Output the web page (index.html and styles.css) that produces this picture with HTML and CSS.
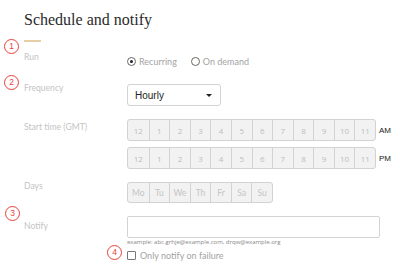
FILE: index.html
```html
<!DOCTYPE html>
<html>
<head>
<meta charset="utf-8">
<link rel="stylesheet" href="styles.css">
</head>
<body>
<div class="page">
  <h1 class="title">Schedule and notify</h1>
  <div class="accent"></div>

  <div class="row row-run">
    <span class="marker m1">1</span>
    <div class="label">Run</div>
    <div class="control radios">
      <label class="radio"><span class="dot on"></span>Recurring</label>
      <label class="radio"><span class="dot"></span>On demand</label>
    </div>
  </div>

  <div class="row row-freq">
    <span class="marker m2">2</span>
    <div class="label">Frequency</div>
    <div class="control">
      <div class="select"><span>Hourly</span><span class="caret"></span></div>
    </div>
  </div>

  <div class="row row-time">
    <div class="label">Start time (GMT)</div>
    <div class="control times">
      <div class="time-line">
        <div class="seg hours">
          <span>12</span><span>1</span><span>2</span><span>3</span><span>4</span><span>5</span><span>6</span><span>7</span><span>8</span><span>9</span><span>10</span><span>11</span>
        </div>
        <span class="ampm">AM</span>
      </div>
      <div class="time-line">
        <div class="seg hours">
          <span>12</span><span>1</span><span>2</span><span>3</span><span>4</span><span>5</span><span>6</span><span>7</span><span>8</span><span>9</span><span>10</span><span>11</span>
        </div>
        <span class="ampm">PM</span>
      </div>
    </div>
  </div>

  <div class="row row-days">
    <div class="label">Days</div>
    <div class="control">
      <div class="seg days">
        <span>Mo</span><span>Tu</span><span>We</span><span>Th</span><span>Fr</span><span>Sa</span><span>Su</span>
      </div>
    </div>
  </div>

  <div class="row row-notify">
    <span class="marker m3">3</span>
    <div class="label">Notify</div>
    <div class="control notify">
      <div class="input"></div>
      <div class="hint">example: abc.grhje@example.com, drqw@example.org</div>
      <label class="check"><span class="marker m4">4</span><span class="box"></span>Only notify on failure</label>
    </div>
  </div>
</div>
</body>
</html>
```
FILE: styles.css
```css
html, body { margin: 0; padding: 0; background: #fff; }
.page {
  position: relative;
  width: 400px;
  height: 269px;
  padding-left: 24px;
  box-sizing: border-box;
  font-family: "Lato", "Open Sans", sans-serif;
  overflow: hidden;
}
.title {
  margin: 0;
  padding-top: 9px;
  font-family: "Liberation Serif", serif;
  font-weight: normal;
  font-size: 16px;
  line-height: 22px;
  color: #2b2b2b;
}
.accent {
  width: 17px;
  height: 2px;
  margin-top: 9px;
  background: #e6cfa4;
}
.row {
  display: flex;
  align-items: flex-start;
}
.label {
  width: 103px;
  flex: none;
  font-size: 8.6px;
  line-height: 14px;
  color: #c4c4c4;
}
.control { flex: none; }

.marker {
  position: absolute;
  width: 13px;
  height: 13px;
  border: 1px solid #e8403a;
  border-radius: 50%;
  color: #e8403a;
  font-family: "Liberation Sans", sans-serif;
  font-size: 8.5px;
  line-height: 13px;
  text-align: center;
}
.m1 { left: 4px; top: 39px; }
.m2 { left: 4px; top: 75px; }
.m3 { left: 5px; top: 206px; }
.m4 { left: 107px; top: 245px; }

.row-run { margin-top: 9px; height: 20px; }
.row-run .label { margin-top: -1px; }
.radios { display: flex; align-items: center; height: 20px; gap: 14px; }
.radio {
  display: flex; align-items: center; gap: 3px;
  font-size: 9px; color: #a3a3a3;
}
.dot {
  width: 7px; height: 7px;
  border: 1px solid #666;
  border-radius: 50%;
  box-sizing: content-box;
  position: relative;
}
.dot.on::after {
  content: "";
  position: absolute;
  left: 2px; top: 2px;
  width: 3px; height: 3px;
  border-radius: 50%;
  background: #222;
}

.row-freq { margin-top: 13px; }
.row-freq .label { margin-top: -3px; }
.select {
  width: 94px; height: 22px;
  box-sizing: border-box;
  border: 1px solid #d3d3d3;
  border-radius: 3px;
  display: flex; align-items: center; justify-content: space-between;
  padding: 0 8px 0 7px;
  font-family: "Liberation Sans", sans-serif;
  font-size: 10px; color: #222;
}
.caret {
  width: 0; height: 0;
  border-left: 3px solid transparent;
  border-right: 3px solid transparent;
  border-top: 3px solid #222;
}

.row-time { margin-top: 13px; }
.row-time .label { margin-top: 1px; }
.times { display: flex; flex-direction: column; gap: 6px; }
.time-line { display: flex; align-items: center; gap: 3px; }
.seg {
  display: grid;
  border: 1px solid #d2d2d2;
  border-radius: 3px;
  background: #f2f2f2;
  box-sizing: border-box;
  overflow: hidden;
}
.seg span {
  display: flex; align-items: center; justify-content: center;
  border-left: 1px solid #d2d2d2;
  font-family: "Open Sans", sans-serif;
  font-size: 8px;
  color: #bdbdbd;
}
.seg span:first-child { border-left: none; }
.hours { width: 249px; height: 22px; grid-template-columns: repeat(12, 1fr); }
.ampm { font-family: "Liberation Sans", sans-serif; font-size: 8px; color: #222; }

.row-days { margin-top: 13px; }
.row-days .label { margin-top: -3px; }
.days { width: 146px; height: 21px; grid-template-columns: repeat(7, 1fr); }
.days span { font-family: "Lato", sans-serif; font-size: 8.5px; color: #c4c4c4; }

.row-notify { margin-top: 13px; }
.row-notify .label { margin-top: 3px; }
.input {
  width: 253px; height: 22px;
  border: 1px solid #d3d3d3;
  border-radius: 2px;
  box-sizing: border-box;
}
.hint { font-family: "Open Sans", sans-serif; font-size: 6px; line-height: 9px; color: #888; }
.check {
  display: flex; align-items: center; gap: 4px;
  margin-top: 3px;
  font-size: 9px; color: #a3a3a3;
}
.box {
  width: 7px; height: 7px;
  border: 1px solid #777;
  border-radius: 1px;
}
```
